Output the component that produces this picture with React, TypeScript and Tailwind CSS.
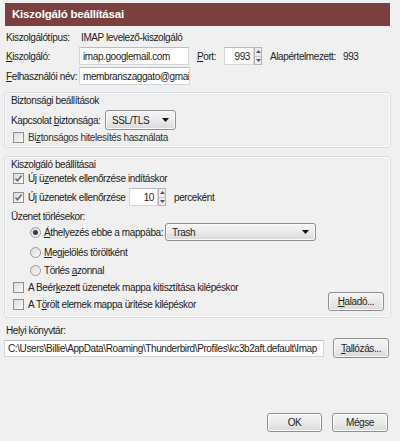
import React from 'react';

const font = { fontFamily: '"Liberation Sans", Arial, sans-serif' };

// Windows 7 style checkbox
const Check = ({ checked }: { checked?: boolean }) => (
  <span className="w-[11px] h-[11px] border border-[#8f8f8f] bg-gradient-to-br from-[#dcdcdc] to-[#fbfbfb] flex items-center justify-center shrink-0">
    {checked && (
      <svg width="9" height="9" viewBox="0 0 9 9">
        <path d="M1.5 4.5 L3.5 6.8 L7.6 1.6" fill="none" stroke="#6a6a6a" strokeWidth="1.6" />
      </svg>
    )}
  </span>
);

const Radio = ({ checked }: { checked?: boolean }) => (
  <span className="w-[11px] h-[11px] rounded-full border border-[#9a9a9a] bg-gradient-to-br from-[#d8d8d8] to-[#fafafa] flex items-center justify-center shrink-0">
    {checked && <span className="w-[5px] h-[5px] rounded-full bg-[#3a3a3a]" />}
  </span>
);

const Arrow = () => (
  <svg width="7" height="4" viewBox="0 0 7 4">
    <path d="M0 0 H7 L3.5 4 Z" fill="#111" />
  </svg>
);

const Spin = () => (
  <span className="w-[8px] h-full flex flex-col border border-[#b5b5b5] bg-[#ececec] shrink-0">
    <span className="flex-1 flex items-center justify-center border-b border-[#c8c8c8]">
      <svg width="5" height="3" viewBox="0 0 5 3"><path d="M0 3 L2.5 0 L5 3 Z" fill="#555" /></svg>
    </span>
    <span className="flex-1 flex items-center justify-center">
      <svg width="5" height="3" viewBox="0 0 5 3"><path d="M0 0 L2.5 3 L5 0 Z" fill="#555" /></svg>
    </span>
  </span>
);

const Button = ({ children, className }: { children: React.ReactNode; className: string }) => (
  <div className={`rounded-[3px] border border-[#8e8f8f] bg-gradient-to-b from-[#f4f4f4] via-[#ebebeb] to-[#d9d9d9] flex items-center justify-center shadow-[inset_0_0_0_1px_#fbfbfb] shrink-0 ${className}`}>
    {children}
  </div>
);

const Input = ({ children, className }: { children: React.ReactNode; className: string }) => (
  <div className={`bg-white border border-[#d3d6da] border-t-[#b9bcc1] flex items-center px-[3px] overflow-hidden shrink-0 ${className}`}>
    {children}
  </div>
);

const Group = ({ title, children, className }: { title: string; children: React.ReactNode; className: string }) => (
  <div className={`mx-[4px] w-[387px] rounded-[3px] border border-[#d5dfe5] shadow-[inset_0_0_0_1px_#fafafa] flex flex-col ${className}`}>
    <div className="h-[14px] flex items-center pl-[6px]">{title}</div>
    {children}
  </div>
);

export default function App() {
  return (
    <div className="w-[400px] h-[441px] bg-[#f0f0f0] flex flex-col text-[10px] tracking-[-0.4px] text-[#222] whitespace-nowrap overflow-hidden" style={font}>
      {/* Title bar */}
      <div className="mt-[3px] mx-[5px] w-[385px] h-[23px] bg-[#7b3f40] flex items-center pl-[7px] text-white font-bold text-[11.5px] tracking-[-0.2px]">
        Kiszolgáló beállításai
      </div>

      {/* Server type */}
      <div className="mt-[3px] h-[16px] flex items-center pl-[6px]">
        <span className="w-[75px] shrink-0">Kiszolgálótípus:</span>
        <span>IMAP levelező-kiszolgáló</span>
      </div>

      {/* Server */}
      <div className="mt-[2px] h-[18px] flex items-center pl-[6px]">
        <span className="w-[73px] shrink-0"><u>K</u>iszolgáló:</span>
        <Input className="w-[110px] h-[18px]">imap.googlemail.com</Input>
        <span className="ml-[8px] w-[27px] shrink-0"><u>P</u>ort:</span>
        <div className="h-[18px] flex">
          <Input className="w-[30px] h-[18px] justify-end">993</Input>
          <Spin />
        </div>
        <span className="ml-[8px] w-[73px] shrink-0">Alapértelmezett:</span>
        <span>993</span>
      </div>

      {/* User name */}
      <div className="mt-[2px] h-[18px] flex items-center pl-[6px]">
        <span className="w-[73px] shrink-0"><u>F</u>elhasználói név:</span>
        <Input className="w-[111px] h-[18px]">membranszaggato@gmail.com</Input>
      </div>

      {/* Security */}
      <Group title="Biztonsági beállítások" className="mt-[7px] h-[56px]">
        <div className="mt-[3px] h-[20px] flex items-center pl-[6px]">
          <span className="w-[94px] shrink-0">Kapcsolat <u>b</u>iztonsága:</span>
          <Button className="w-[71px] h-[20px] !justify-between px-[6px]">
            <span>SSL/TLS</span>
            <Arrow />
          </Button>
        </div>
        <div className="h-[14px] flex items-center pl-[8px] gap-[4px] text-[#333]">
          <Check />
          <span>Bi<u>z</u>tonságos hitelesítés használata</span>
        </div>
      </Group>

      {/* Server settings */}
      <Group title="Kiszolgáló beállításai" className="mt-[8px] h-[162px]">
        <div className="h-[14px] flex items-center pl-[8px] gap-[4px]">
          <Check checked />
          <span>Új ü<u>z</u>enetek ellenőrzése indításkor</span>
        </div>
        <div className="mt-[3px] h-[18px] flex items-center pl-[8px]">
          <Check checked />
          <span className="ml-[4px] w-[101px] shrink-0">Új üzenetek ellenőrzése</span>
          <div className="h-[18px] flex">
            <Input className="w-[29px] h-[18px] justify-end">10</Input>
            <Spin />
          </div>
          <span className="ml-[8px]">perceként</span>
        </div>
        <div className="mt-[3px] h-[14px] flex items-center pl-[6px]">Üzenet törlésekor:</div>
        <div className="h-[18px] flex items-center pl-[25px]">
          <Radio checked />
          <span className="ml-[3px] w-[121px] shrink-0"><u>Á</u>thelyezés ebbe a mappába:</span>
          <Button className="w-[151px] h-[18px] !justify-between px-[6px]">
            <span>Trash</span>
            <Arrow />
          </Button>
        </div>
        <div className="mt-[4px] h-[14px] flex items-center pl-[25px] gap-[3px]">
          <Radio />
          <span><u>M</u>egjelölés töröltként</span>
        </div>
        <div className="mt-[4px] h-[14px] flex items-center pl-[25px] gap-[3px]">
          <Radio />
          <span>Törlés <u>a</u>zonnal</span>
        </div>
        <div className="mt-[3px] flex items-end pr-[6px]">
          <div className="flex-1 flex flex-col gap-[3px]">
            <div className="h-[14px] flex items-center pl-[8px] gap-[4px]">
              <Check />
              <span>A Beér<u>k</u>ezett üzenetek mappa kitisztítása kilépéskor</span>
            </div>
            <div className="h-[14px] flex items-center pl-[8px] gap-[4px]">
              <Check />
              <span>A T<u>ö</u>rölt elemek mappa ürítése kilépéskor</span>
            </div>
          </div>
          <Button className="w-[56px] h-[19px]"><span><u>H</u>aladó...</span></Button>
        </div>
      </Group>

      {/* Local directory */}
      <div className="mt-[5px] h-[14px] flex items-center pl-[6px]">Helyi könyvtár:</div>
      <div className="mt-[1px] h-[20px] flex items-center pl-[4px]">
        <Input className="w-[320px] h-[17px]">C:\Users\Billie\AppData\Roaming\Thunderbird\Profiles\kc3b2aft.default\Imap</Input>
        <Button className="ml-[9px] w-[56px] h-[20px]"><span><u>T</u>allózás...</span></Button>
      </div>

      {/* Dialog buttons */}
      <div className="mt-auto mb-[9px] flex justify-end gap-[10px] pr-[12px]">
        <Button className="w-[55px] h-[19px]">OK</Button>
        <Button className="w-[56px] h-[19px]">Mégse</Button>
      </div>
    </div>
  );
}
